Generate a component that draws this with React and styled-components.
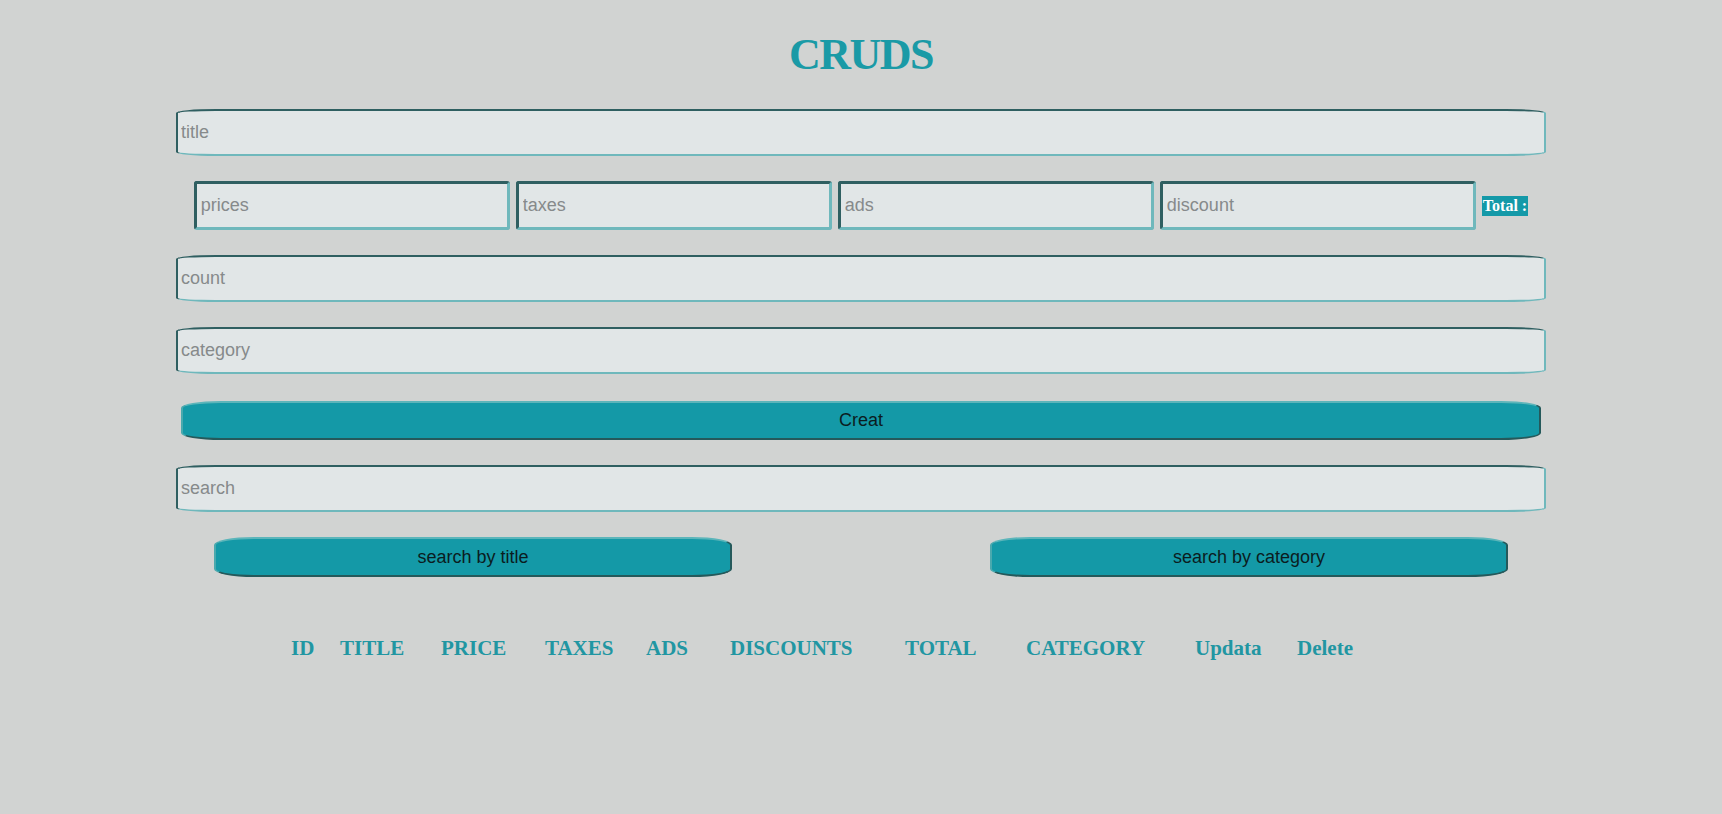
import React from "react"
import styled, { createGlobalStyle } from "styled-components"

const GlobalStyle = createGlobalStyle`
  html, body {
    margin: 0;
    padding: 0;
    background: #d1d3d2;
    min-height: 814px;
  }
  body {
    font-family: "Liberation Sans", Arial, sans-serif;
  }
`

const columns = [
  { label: "ID", width: 49 },
  { label: "TITLE", width: 101 },
  { label: "PRICE", width: 104 },
  { label: "TAXES", width: 101 },
  { label: "ADS", width: 84 },
  { label: "DISCOUNTS", width: 175 },
  { label: "TOTAL", width: 121 },
  { label: "CATEGORY", width: 169 },
  { label: "Updata", width: 102 },
  { label: "Delete", width: 57 },
]

export default function App() {
  return (
    <Page>
      <GlobalStyle />
      <Heading>CRUDS</Heading>
      <Form>
        <TextInput placeholder="title" />
        <PriceRow>
          <SmallInput placeholder="prices" />
          <SmallInput placeholder="taxes" />
          <SmallInput placeholder="ads" />
          <SmallInput placeholder="discount" />
          <Total>Total :</Total>
        </PriceRow>
        <TextInput placeholder="count" />
        <TextInput placeholder="category" />
        <CreateButton>Creat</CreateButton>
        <TextInput placeholder="search" />
        <SearchRow>
          <SearchButton>search by title</SearchButton>
          <SearchButton>search by category</SearchButton>
        </SearchRow>
      </Form>
      <TableHead $cols={columns.map((c) => `${c.width}px`).join(" ")}>
        {columns.map((c) => (
          <HeadCell key={c.label}>{c.label}</HeadCell>
        ))}
      </TableHead>
    </Page>
  )
}

const Page = styled.div`
  width: 1370px;
  margin: 0 auto;
  padding-top: 29px;
  padding-bottom: 150px;
`

const Heading = styled.h1`
  margin: 0 0 28px;
  text-align: center;
  font-family: "Liberation Serif", "Times New Roman", serif;
  font-size: 44px;
  line-height: 52px;
  font-weight: bold;
  color: #1a9aa6;
  letter-spacing: -1.5px;
`

const Form = styled.div`
  display: flex;
  flex-direction: column;
  gap: 25px;
`

const TextInput = styled.input`
  box-sizing: border-box;
  width: 100%;
  height: 47px;
  padding: 0 3px;
  border: 2px solid;
  border-color: #2f5f61 #6fb8bc #6fb8bc #2f5f61;
  border-radius: 40px / 4px;
  background: #e1e6e7;
  font-family: "Liberation Sans", Arial, sans-serif;
  font-size: 18px;
  color: #333;
  outline: none;

  &::placeholder {
    color: #868a8b;
  }
`

const PriceRow = styled.div`
  display: flex;
  justify-content: center;
  align-items: center;
  gap: 6px;
  margin-left: 0;
`

const SmallInput = styled(TextInput)`
  width: 316px;
  height: 49px;
  padding: 0 4px;
  border-width: 3px;
  border-radius: 3px;
`

const Total = styled.span`
  padding: 1px 1px 2px;
  background: #1499a8;
  color: #fff;
  font-family: "Liberation Serif", "Times New Roman", serif;
  font-weight: bold;
  font-size: 16px;
  line-height: 17px;
`

const CreateButton = styled.button`
  box-sizing: border-box;
  margin: 2px 5px 0;
  height: 39px;
  border: 2px solid;
  border-color: #5cb5ba #25595b #25595b #4aa9ae;
  border-radius: 40px / 7px;
  background: #1499a7;
  color: #0b1d1f;
  font-family: "Liberation Sans", Arial, sans-serif;
  font-size: 18px;
`

const SearchRow = styled.div`
  display: flex;
  justify-content: space-between;
  padding: 0 38px;
`

const SearchButton = styled(CreateButton)`
  margin: 0;
  width: 518px;
  height: 40px;
  border-radius: 40px / 8px;
`

const TableHead = styled.div`
  display: grid;
  grid-template-columns: ${(p) => p.$cols};
  margin: 59px 0 0 115px;
`

const HeadCell = styled.div`
  font-family: "Liberation Serif", "Times New Roman", serif;
  font-weight: bold;
  font-size: 21px;
  line-height: 24px;
  color: #2196a2;
  white-space: nowrap;
`
